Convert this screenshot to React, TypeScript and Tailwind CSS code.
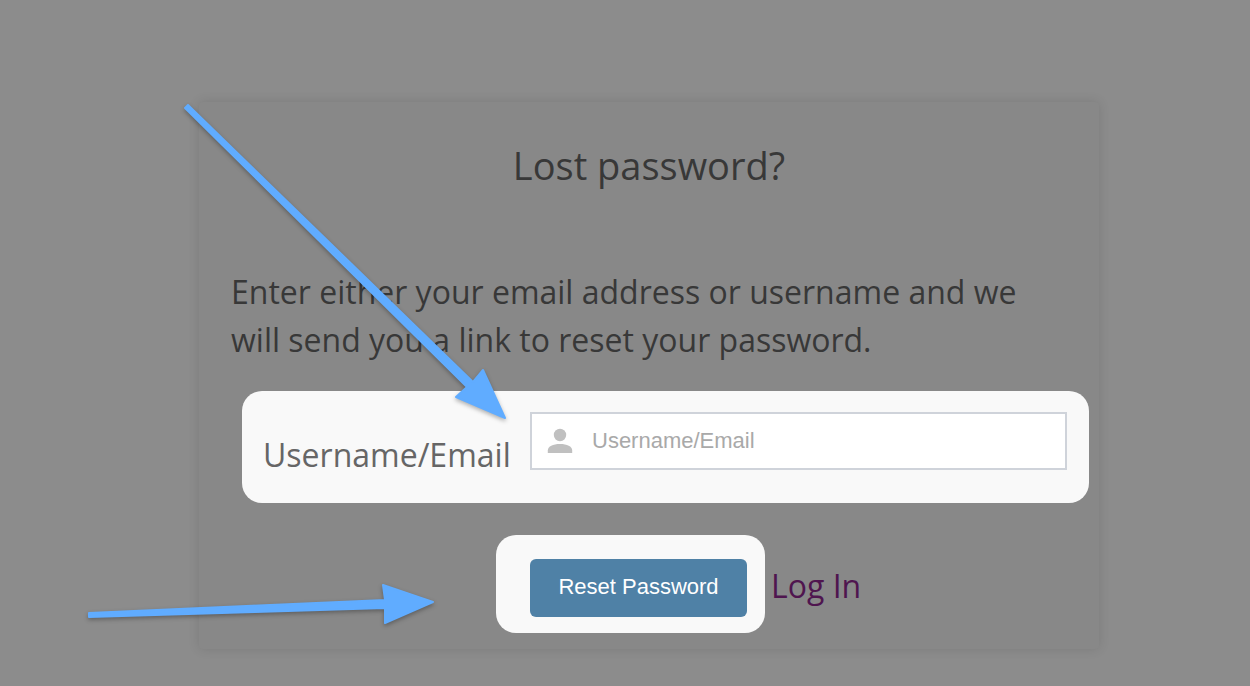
export default function App() {
  return (
    <main className="relative min-h-screen bg-[#8c8c8c] pt-[102px] pr-[151px] pb-[37px] pl-[199px] font-['Open_Sans',sans-serif] text-[#383838]">
      <section className="flex min-h-[547px] flex-col rounded-sm bg-[#888888] shadow-[0_0_12px_rgba(0,0,0,0.12)]">
        <h1 className="pt-9 text-center text-[38px] leading-[54px]">Lost password?</h1>
        <form className="flex flex-col" onSubmit={(event) => event.preventDefault()}>
          <p className="mt-[76px] px-8 text-[32px] leading-[48px]">
            Enter either your email address or username and we will send you a link to reset your password.
          </p>
          <div className="mt-[27px] mr-[10px] ml-[43px] flex h-28 rounded-[20px] bg-[#f9f9f9] pt-[21px] pr-[22px] pl-[21px]">
            <label htmlFor="username" className="w-[267px] shrink-0 pt-[19px] text-[32px] leading-[48px] text-[#666666]">
              Username/Email
            </label>
            <div className="flex h-[58px] min-w-0 grow items-center border-2 border-[#cfd3da] bg-white pl-[15px]">
              <svg viewBox="0 0 26 26" className="size-[26px] shrink-0 fill-[#c0c0c0]" aria-hidden="true">
                <circle cx="13" cy="7" r="6.2" />
                <path d="M.8 25v-2.5C.8 18.2 6 16 13 16s12.2 2.200 12.200 6.500V25z" />
              </svg>
              <input
                id="username"
                type="text"
                placeholder="Username/Email"
                className="min-w-0 grow bg-transparent pl-[19px] font-['Liberation_Sans',sans-serif] text-[22px] leading-8 outline-none placeholder:text-[#a9a9a9]"
              />
            </div>
          </div>
          <div className="mt-8 ml-[297px] flex items-center">
            <div className="rounded-[20px] bg-[#f9f9f9] pt-6 pr-[18px] pb-4 pl-[34px]">
              <button type="submit" className="block h-[58px] w-[217px] rounded-md bg-[#4f81a6] pb-1 font-['Liberation_Sans',sans-serif] text-[22px] text-white">
                Reset Password
              </button>
            </div>
            <a href="#login" className="pt-1 pl-[6px] text-[32px] leading-[48px] text-[#4f154f]">Log In</a>
          </div>
        </form>
      </section>
      <svg className="pointer-events-none absolute top-0 left-0 h-[686px] w-[1250px] drop-shadow-[0_2px_2px_rgba(0,0,0,0.3)]" viewBox="0 0 1250 686" fill="#60acff" stroke="#60acff" strokeWidth="2" strokeLinejoin="round" aria-hidden="true">
        <path d="M188 105 473 382 483 370 505 418 456 397 467 387 185 108z" />
        <path d="M89 613 385 600 383 585 433 602 385 623 385 608 89 617z" />
      </svg>
    </main>
  );
}
